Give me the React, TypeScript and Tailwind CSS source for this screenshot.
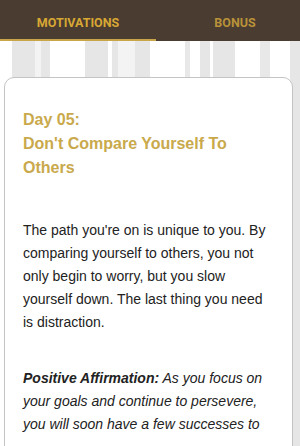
export default function App() {
  return (
    <div className="h-[446px] w-[300px] overflow-hidden font-['Liberation_Sans',Arial,sans-serif] bg-[linear-gradient(to_right,#fff_0,#fff_12px,#e6e6e6_12px,#e6e6e6_35px,#f3f3f3_35px,#f3f3f3_41px,#e6e6e6_41px,#e6e6e6_50px,#fff_50px,#fff_85px,#e6e6e6_85px,#e6e6e6_108px,#fff_108px,#fff_112px,#e6e6e6_112px,#e6e6e6_118px,#f3f3f3_118px,#f3f3f3_135px,#e6e6e6_135px,#e6e6e6_150px,#fff_150px,#fff_185px,#e8e8e8_185px,#e8e8e8_190px,#fff_190px,#fff_200px,#e6e6e6_200px,#e6e6e6_210px,#fff_210px,#fff_213px,#e6e6e6_213px,#e6e6e6_235px,#fff_235px,#fff_260px,#e8e8e8_260px,#e8e8e8_270px,#fff_270px,#fff_290px,#e6e6e6_290px,#e6e6e6_300px)]">
      {/* Tabs */}
      <div className="flex h-[41px] bg-[#4a3c30] font-['Roboto',sans-serif] text-[12.5px] font-bold uppercase">
        <div className="flex w-[156px] items-center justify-center border-b-2 border-[#c9a54a] pt-[8px] text-[#d8a834]">
          Motivations
        </div>
        <div className="flex flex-1 items-center justify-center pl-[14px] pt-[6px] text-[#b8913a]">
          Bonus
        </div>
      </div>

      {/* Card */}
      <div className="mt-[36px] ml-[4px] w-[289px] rounded-[10px] border border-[#c4c4c4] bg-white px-[18px] pt-[30px] pb-6">
        <h2 className="text-[16px] font-bold leading-[24px] text-[#c9a94c]">
          Day 05:
          <br />
          Don't Compare Yourself To Others
        </h2>

        <p className="mt-[39px] text-[14px] leading-[23px] text-[#222]">
          The path you're on is unique to you. By comparing yourself to others, you not only begin to worry, but you slow yourself down. The last thing you need is distraction.
        </p>

        <p className="mt-[33px] text-[14px] italic leading-[23px] text-[#222]">
          <span className="font-bold">Positive Affirmation:</span> As you focus on your goals and continue to persevere, you will soon have a few successes to
        </p>
      </div>
    </div>
  )
}
